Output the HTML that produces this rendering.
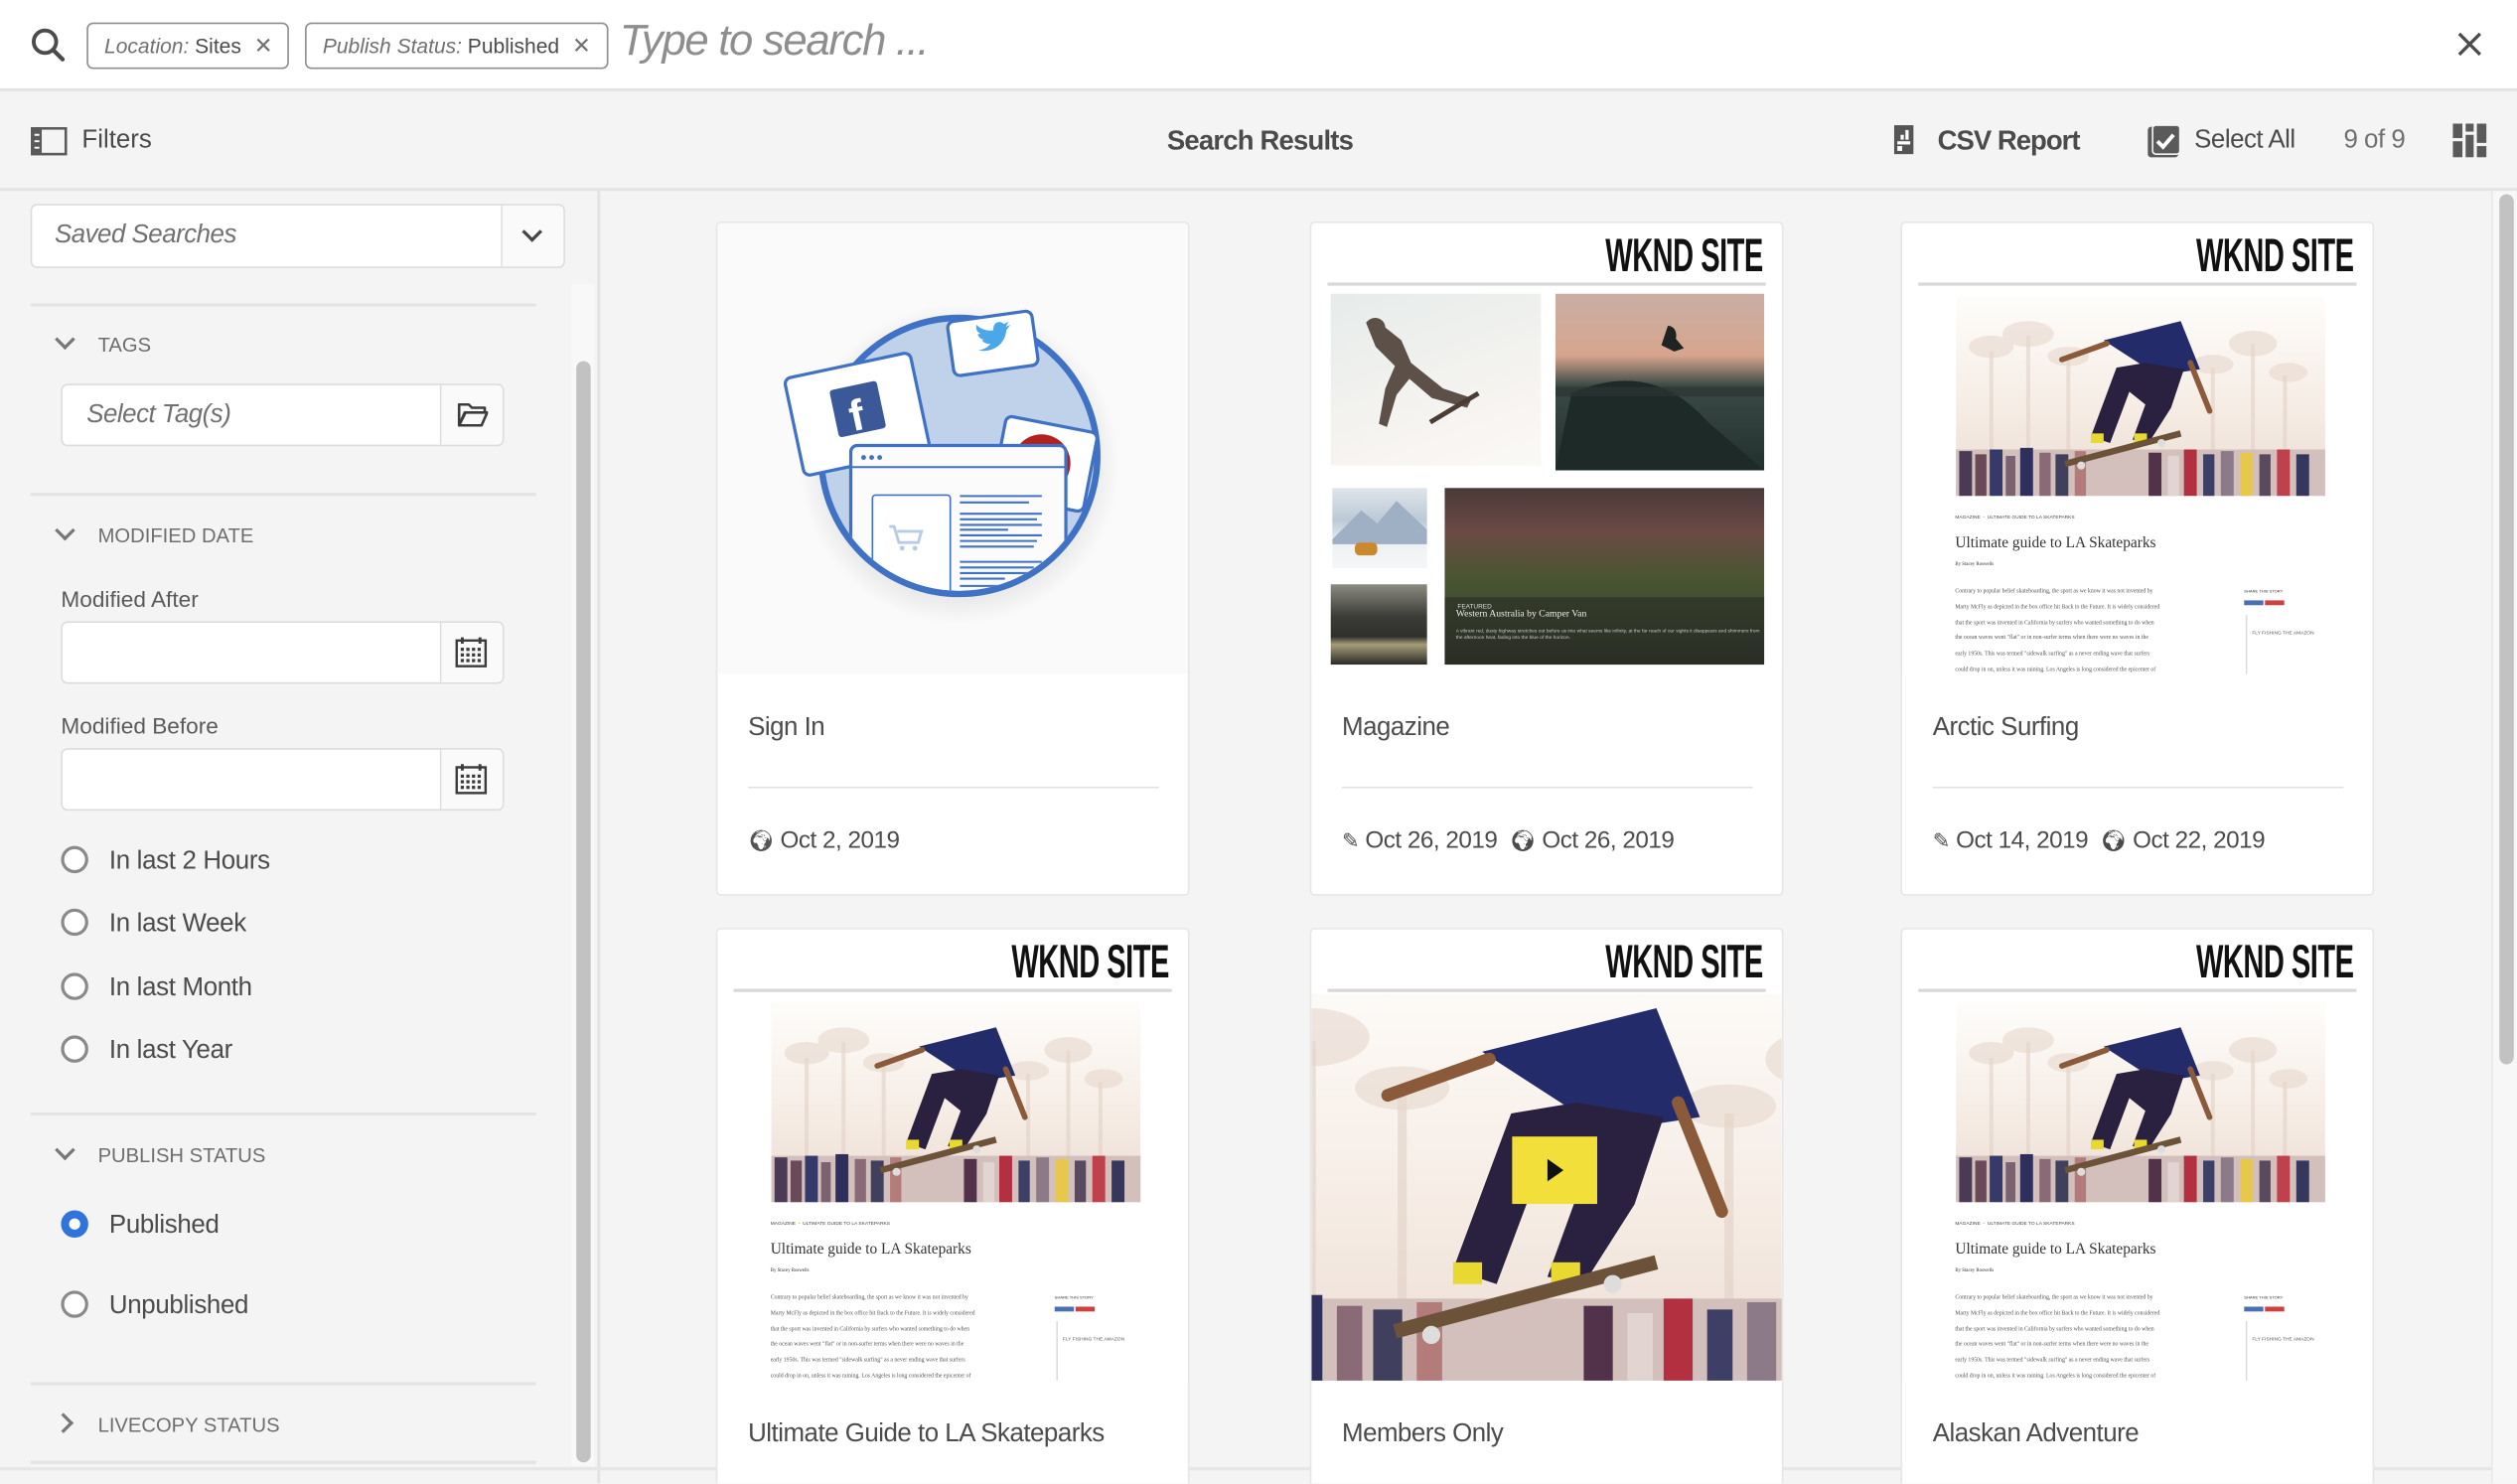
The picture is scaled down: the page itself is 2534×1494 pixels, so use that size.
<!DOCTYPE html>
<html><head><meta charset="utf-8">
<style>
*{box-sizing:border-box;margin:0;padding:0}
html,body{width:2534px;height:1494px;overflow:hidden;background:#f4f4f4}
#w{position:absolute;left:0;top:0;width:1568px;height:924px;transform:scale(1.616071);transform-origin:0 0;font-family:"Liberation Sans",sans-serif;color:#4b4b4b;background:#f4f4f4;overflow:hidden}
.a{position:absolute}
.tag{position:absolute;top:14px;height:29px;border:1px solid #8e8e8e;border-radius:4px;background:#fff;font-size:13px;line-height:27px;padding:0 10px;color:#4b4b4b;white-space:nowrap}
.tag i{color:#707070}
.tag b{font-weight:normal;color:#707070;margin-left:8px;font-size:14px}
.hr{position:absolute;height:2px;background:#e4e4e4}
.sec{position:absolute;left:61px;font-size:12.5px;color:#6e6e6e}
.chev{position:absolute;left:36px;width:9px;height:9px;border-right:2px solid #777;border-bottom:2px solid #777;transform:rotate(45deg)}
.inp{position:absolute;left:38px;width:276px;height:39px;background:#fff;border:1px solid #dcdcdc;border-radius:4px}
.inp .btn{position:absolute;right:0;top:0;width:39px;height:37px;border-left:1px solid #dcdcdc;background:#fafafa;border-radius:0 4px 4px 0}
.lbl{position:absolute;left:38px;font-size:14px;color:#5a5a5a}
.rad{position:absolute;left:38px;width:17px;height:17px;border:2px solid #8a8a8a;border-radius:50%;background:#fff}
.rt{position:absolute;left:68px;font-size:16px;color:#4b4b4b;letter-spacing:-.2px}
.card{position:absolute;width:295px;height:420px;background:#fff;border:1px solid #e6e6e6;border-radius:3px;overflow:hidden}
.card .img{position:absolute;left:0;top:0;width:293px;height:281px;background:#fff;overflow:hidden}
.card .tt{position:absolute;left:19px;top:306px;font-size:16px;color:#4b4b4b;letter-spacing:-.3px}
.card .dv{position:absolute;left:19px;top:351px;width:256px;height:1px;background:#e1e1e1}
.card .dt{position:absolute;left:19px;top:376px;font-size:15px;color:#4b4b4b;white-space:nowrap;letter-spacing:-.3px}
.wk{position:absolute;right:12px;top:5px;font:bold 29px "Liberation Sans",sans-serif;color:#111;transform:scaleX(.62);transform-origin:right center;letter-spacing:-.5px}
.wl{position:absolute;left:10px;right:10px;top:37px;height:2px;background:#d8d8d8}
.art{position:absolute;left:33px;font-family:"Liberation Serif",serif;color:#333;white-space:nowrap}
</style></head><body><div id="w">

<div class="a" style="left:0;top:0;width:1568px;height:57px;background:#fff;border-bottom:2px solid #e4e4e4"></div>
<svg class="a" style="left:19px;top:17px" width="22" height="22" viewBox="0 0 22 22"><circle cx="9" cy="9" r="7" fill="none" stroke="#4b4b4b" stroke-width="2.4"/><path d="M14 14 L20 20" stroke="#4b4b4b" stroke-width="2.6" stroke-linecap="round"/></svg>
<div class="tag" style="left:54px;width:126px"><i>Location:</i> Sites<b>✕</b></div>
<div class="tag" style="left:190px;width:189px"><i>Publish Status:</i> Published<b>✕</b></div>
<div class="a" style="left:386px;top:10px;font-size:27px;font-style:italic;color:#8e8e8e;letter-spacing:-.8px">Type to search ...</div>
<svg class="a" style="left:1530px;top:19px" width="17" height="17" viewBox="0 0 17 17"><path d="M2 2L15 15M15 2L2 15" stroke="#4b4b4b" stroke-width="2"/></svg>

<div class="a" style="left:0;top:117px;width:1568px;height:2px;background:#e4e4e4"></div>
<svg class="a" style="left:19px;top:79px" width="23" height="18" viewBox="0 0 23 18"><rect x="1" y="1" width="21" height="16" fill="none" stroke="#5a5a5a" stroke-width="1.6"/><rect x="1" y="1" width="6" height="16" fill="#5a5a5a"/><path d="M2.5 5h3M2.5 9h3M2.5 13h3" stroke="#fff" stroke-width="1.2"/></svg>
<div class="a" style="left:51px;top:79px;font-size:16px;color:#4b4b4b">Filters</div>
<div class="a" style="left:727px;top:78px;font-size:17px;font-weight:bold;color:#4b4b4b;letter-spacing:-.5px">Search Results</div>
<svg class="a" style="left:1179px;top:77px" width="14" height="20" viewBox="0 0 14 20"><rect x="1" y="1" width="12" height="18" fill="#555"/><rect x="3" y="11" width="8" height="2" fill="#fff"/><rect x="3" y="14" width="3" height="3" fill="#fff"/><rect x="8" y="4" width="2" height="6" fill="#fff"/><rect x="5" y="7" width="2" height="3" fill="#fff"/></svg>
<div class="a" style="left:1207px;top:78px;font-size:17px;font-weight:bold;color:#4b4b4b;letter-spacing:-.6px">CSV Report</div>
<svg class="a" style="left:1337px;top:77px" width="22" height="22" viewBox="0 0 22 22"><rect x="1" y="2" width="19" height="19" rx="2" fill="#5a5a5a"/><rect x="4" y="1" width="17" height="18" rx="2" fill="#5a5a5a" stroke="#f4f4f4" stroke-width="1"/><path d="M7 11l3.5 3.5L17 7" stroke="#fff" stroke-width="2.4" fill="none"/></svg>
<div class="a" style="left:1367px;top:79px;font-size:16px;color:#4b4b4b;letter-spacing:-.3px">Select All</div>
<div class="a" style="left:1460px;top:79px;font-size:16px;color:#707070;letter-spacing:-.3px">9 of 9</div>
<svg class="a" style="left:1528px;top:77px" width="21" height="21" viewBox="0 0 21 21" fill="#5a5a5a"><rect x="0" y="0" width="6" height="9"/><rect x="0" y="11" width="6" height="10"/><rect x="8" y="0" width="5" height="5"/><rect x="8" y="7" width="5" height="14"/><rect x="15" y="0" width="6" height="12"/><rect x="15" y="14" width="6" height="7"/></svg>

<div class="a" style="left:372px;top:119px;width:2px;height:806px;background:#e4e4e4"></div>
<div class="a" style="left:19px;top:127px;width:333px;height:40px;background:#fff;border:1px solid #dcdcdc;border-radius:4px"></div>
<div class="a" style="left:312px;top:128px;width:39px;height:38px;border-left:1px solid #dcdcdc;background:#fafafa;border-radius:0 4px 4px 0"></div>
<div class="a" style="left:34px;top:138px;font-size:16px;font-style:italic;color:#707070;letter-spacing:-.3px">Saved Searches</div>
<div class="a" style="left:327px;top:140px;width:9px;height:9px;border-right:2px solid #444;border-bottom:2px solid #444;transform:rotate(45deg)"></div>

<div class="a" style="left:356px;top:177px;width:14px;height:736px;background:#f8f8f8"></div>
<div class="a" style="left:359px;top:225px;width:9px;height:686px;background:#c2c2c2;border-radius:5px"></div>

<div class="hr" style="left:19px;top:189px;width:315px"></div>
<div class="chev" style="top:207px"></div>
<div class="sec" style="top:208px">TAGS</div>
<div class="inp" style="top:239px"><div class="btn"></div></div>
<div class="a" style="left:54px;top:250px;font-size:16px;font-style:italic;color:#707070;letter-spacing:-.3px">Select Tag(s)</div>
<svg class="a" style="left:285px;top:250px" width="19" height="16" viewBox="0 0 19 16"><path d="M1 2h6l2 2h8v3H5L1 15z M1 15L4.5 7H18.5L15 15z" fill="none" stroke="#3c3c3c" stroke-width="1.6" stroke-linejoin="round"/></svg>

<div class="hr" style="left:19px;top:307px;width:315px"></div>
<div class="chev" style="top:326px"></div>
<div class="sec" style="top:327px">MODIFIED DATE</div>
<div class="lbl" style="top:365px">Modified After</div>
<div class="inp" style="top:387px"><div class="btn"></div></div>
<div class="lbl" style="top:444px">Modified Before</div>
<div class="inp" style="top:466px"><div class="btn"></div></div>
<svg class="a" style="left:283px;top:396px" width="21" height="21" viewBox="0 0 21 21"><rect x="1.5" y="3" width="18" height="16" fill="none" stroke="#3c3c3c" stroke-width="1.5"/><path d="M5 1v4M16 1v4" stroke="#3c3c3c" stroke-width="1.8"/><g fill="#3c3c3c"><rect x="4" y="7.5" width="2" height="2"/><rect x="7.5" y="7.5" width="2" height="2"/><rect x="11" y="7.5" width="2" height="2"/><rect x="14.5" y="7.5" width="2" height="2"/><rect x="4" y="11" width="2" height="2"/><rect x="7.5" y="11" width="2" height="2"/><rect x="11" y="11" width="2" height="2"/><rect x="14.5" y="11" width="2" height="2"/><rect x="4" y="14.5" width="2" height="2"/><rect x="7.5" y="14.5" width="2" height="2"/><rect x="11" y="14.5" width="2" height="2"/><rect x="14.5" y="14.5" width="2" height="2"/></g></svg>
<svg class="a" style="left:283px;top:475px" width="21" height="21" viewBox="0 0 21 21"><rect x="1.5" y="3" width="18" height="16" fill="none" stroke="#3c3c3c" stroke-width="1.5"/><path d="M5 1v4M16 1v4" stroke="#3c3c3c" stroke-width="1.8"/><g fill="#3c3c3c"><rect x="4" y="7.5" width="2" height="2"/><rect x="7.5" y="7.5" width="2" height="2"/><rect x="11" y="7.5" width="2" height="2"/><rect x="14.5" y="7.5" width="2" height="2"/><rect x="4" y="11" width="2" height="2"/><rect x="7.5" y="11" width="2" height="2"/><rect x="11" y="11" width="2" height="2"/><rect x="14.5" y="11" width="2" height="2"/><rect x="4" y="14.5" width="2" height="2"/><rect x="7.5" y="14.5" width="2" height="2"/><rect x="11" y="14.5" width="2" height="2"/><rect x="14.5" y="14.5" width="2" height="2"/></g></svg>

<div class="rad" style="top:527px"></div><div class="rt" style="top:528px">In last 2 Hours</div>
<div class="rad" style="top:566px"></div><div class="rt" style="top:567px">In last Week</div>
<div class="rad" style="top:606px"></div><div class="rt" style="top:607px">In last Month</div>
<div class="rad" style="top:645px"></div><div class="rt" style="top:646px">In last Year</div>

<div class="hr" style="left:19px;top:693px;width:315px"></div>
<div class="chev" style="top:712px"></div>
<div class="sec" style="top:713px">PUBLISH STATUS</div>
<div class="rad" style="top:754px;border:5px solid #2e74dc"></div><div class="rt" style="top:755px">Published</div>
<div class="rad" style="top:804px"></div><div class="rt" style="top:805px">Unpublished</div>
<div class="hr" style="left:19px;top:861px;width:315px"></div>
<div class="a" style="left:35px;top:882px;width:9px;height:9px;border-right:2px solid #777;border-bottom:2px solid #777;transform:rotate(-45deg)"></div>
<div class="sec" style="top:881px">LIVECOPY STATUS</div>
<div class="hr" style="left:19px;top:910px;width:315px"></div>
<div class="hr" style="left:0;top:914px;width:1568px;background:#e6e6e6"></div>

<div class="a" style="left:1552px;top:119px;width:16px;height:806px;background:#f7f7f7;border-left:1px solid #e8e8e8"></div>
<div class="a" style="left:1557px;top:121px;width:9px;height:542px;background:#c2c2c2;border-radius:5px"></div>

<svg width="0" height="0" style="position:absolute"><defs>
<linearGradient id="sk" x1="0" y1="0" x2="0" y2="1"><stop offset="0" stop-color="#fefdfb"/><stop offset=".6" stop-color="#f5ebe3"/><stop offset="1" stop-color="#eadbd3"/></linearGradient>
<symbol id="skater" viewBox="0 0 230 125">
<rect width="230" height="125" fill="url(#sk)"/>
<g stroke="#e2d2c6" stroke-width="2.5" opacity=".6"><path d="M22 110V35M45 110V25M70 110V40M160 110V45M185 110V30M205 110V50"/></g>
<g fill="#e6d6ca" opacity=".55"><ellipse cx="22" cy="32" rx="14" ry="7"/><ellipse cx="45" cy="24" rx="16" ry="8"/><ellipse cx="70" cy="38" rx="13" ry="6"/><ellipse cx="160" cy="43" rx="13" ry="6"/><ellipse cx="185" cy="30" rx="15" ry="8"/><ellipse cx="207" cy="48" rx="12" ry="6"/></g>
<g><rect x="0" y="96" width="230" height="29" fill="#d3bfbc"/>
<rect x="2" y="97" width="8" height="28" fill="#4b3a55"/><rect x="12" y="99" width="7" height="26" fill="#6a4a58"/><rect x="21" y="96" width="8" height="29" fill="#343a6a"/><rect x="31" y="100" width="6" height="25" fill="#7a6270"/><rect x="40" y="95" width="8" height="30" fill="#2f2f5e"/><rect x="52" y="98" width="7" height="27" fill="#8a6a76"/><rect x="62" y="99" width="8" height="26" fill="#40405e"/><rect x="74" y="97" width="7" height="28" fill="#b37b7a"/><rect x="120" y="98" width="8" height="27" fill="#52324a"/><rect x="132" y="100" width="7" height="25" fill="#e2d4d0"/><rect x="142" y="96" width="8" height="29" fill="#b23040"/><rect x="154" y="99" width="7" height="26" fill="#3d3f66"/><rect x="165" y="97" width="8" height="28" fill="#8c7a88"/><rect x="177" y="98" width="8" height="27" fill="#e8c84a"/><rect x="189" y="99" width="7" height="26" fill="#5a4a60"/><rect x="200" y="96" width="8" height="29" fill="#c0414e"/><rect x="212" y="99" width="8" height="26" fill="#36375c"/></g>
<path d="M92 28 L140 16 L152 46 L126 50 Z" fill="#232b6a"/>
<path d="M118 42 L142 46 L134 70 L120 92 L110 90 L118 68 L108 60 L96 92 L84 88 L100 45 Z" fill="#2a2040"/>
<path d="M94 30 L66 40 M146 42 L158 72" stroke="#8b5a3a" stroke-width="3.5" fill="none" stroke-linecap="round"/>
<rect x="84" y="86" width="8" height="6" fill="#e8d830"/><rect x="111" y="86" width="8" height="6" fill="#e8d830"/>
<path d="M68 105 L140 86" stroke="#6b5238" stroke-width="4"/>
<circle cx="78" cy="106" r="2.5" fill="#ddd"/><circle cx="128" cy="92" r="2.5" fill="#ddd"/>
</symbol>
</defs></svg>

<div class="card" style="left:446px;top:138px">
 <div class="img" style="background:#fafafa">
 <svg width="293" height="281" viewBox="0 0 293 281">
  <defs><clipPath id="cc"><circle cx="150.6" cy="145" r="84"/></clipPath><radialGradient id="sh"><stop offset=".8" stop-color="#000" stop-opacity=".08"/><stop offset="1" stop-color="#000" stop-opacity="0"/></radialGradient></defs>
  <circle cx="150.6" cy="150" r="100" fill="url(#sh)"/>
  <circle cx="150.6" cy="145" r="86" fill="#c0d2ea" stroke="#3f72c5" stroke-width="4"/>
  <g transform="rotate(-12 87 119)"><rect x="47" y="88" width="80" height="62" rx="4" fill="#fff" stroke="#3f72c5" stroke-width="2"/><rect x="73" y="101" width="30" height="30" rx="2" fill="#3b5998"/><text x="82" y="129" font-family="Liberation Sans" font-weight="bold" font-size="27" fill="#fff">f</text></g>
  <g transform="rotate(-8 171 75)"><rect x="145" y="58" width="53" height="34" rx="4" fill="#fff" stroke="#3f72c5" stroke-width="2"/><path d="M162 78c8 3 17-1 19-10l3-3-3 1 2-3-3 1c-2-3-7-2-7 3-4 0-8-2-10-5-1 3 0 5 2 6l-2 0c0 2 2 4 4 4h-2c1 2 3 3 5 3-2 2-5 3-8 3z" fill="#4aa8e8"/></g>
  <g transform="rotate(11 204 149)"><rect x="175" y="125" width="58" height="50" rx="4" fill="#fff" stroke="#3f72c5" stroke-width="2"/><circle cx="202" cy="150" r="18" fill="#b3201e"/></g>
  <g clip-path="url(#cc)"><rect x="83" y="138.5" width="134" height="140" rx="4" fill="#fbfbfb" stroke="#3f72c5" stroke-width="2"/>
  <path d="M83 152h134" stroke="#3f72c5" stroke-width="1.2"/><circle cx="91" cy="146" r="1.5" fill="#3f72c5"/><circle cx="96" cy="146" r="1.5" fill="#3f72c5"/><circle cx="101" cy="146" r="1.5" fill="#3f72c5"/>
  <rect x="96.5" y="169.4" width="48.5" height="100" rx="2" fill="#fff" stroke="#3f72c5" stroke-width="1"/>
  <path d="M107 189h3l3 10h12l2-7h-15" stroke="#b9cbe6" stroke-width="1.8" fill="none"/><circle cx="115" cy="202.5" r="1.5" fill="#b9cbe6"/><circle cx="123" cy="202.5" r="1.5" fill="#b9cbe6"/>
  <g stroke="#3f72c5" stroke-width="1.3"><path d="M151 170h51M151 174h43M151 181h51M151 184.5h48M151 188h51M151 191h30M151 194.5h51M151 198h48M151 201.5h46M151 211h51M151 214.5h46M151 218h48M151 221.5h28M151 226h51"/></g></g>
 </svg></div>
 <div class="tt">Sign In</div><div class="dv"></div>
 <div class="dt"><span style="font-size:13px;color:#555">🌍&#xFE0E;</span> Oct 2, 2019</div>
</div>

<div class="card" style="left:816px;top:138px">
 <div class="img">
  <div class="wk">WKND SITE</div><div class="wl"></div>
  <div class="a" style="left:12px;top:44px;width:131px;height:107px;background:linear-gradient(160deg,#e6ecea,#f7f4f1 70%,#fbf9f6)"></div>
  <svg class="a" style="left:12px;top:44px" width="131" height="107" viewBox="0 0 131 107"><path d="M22 18c5-6 12-2 12 3l10 8 6 14 20 16 18 6-3 6-22-6-14-12-8 10-6 20-5-2 4-22 6-14-12-12z" fill="#5c5048"/><path d="M62 80 L92 62" stroke="#4a3d36" stroke-width="3"/></svg>
  <div class="a" style="left:152px;top:44px;width:130px;height:110px;background:linear-gradient(180deg,#c9aea4 0%,#d7a58e 35%,#3c4a46 52%,#20302d 100%)"></div>
  <svg class="a" style="left:152px;top:44px" width="130" height="110" viewBox="0 0 130 110"><path d="M10 62 Q60 40 95 80 L130 110 L0 110Z" fill="#1d2a28"/><path d="M0 58h130v6H0z" fill="#2b3533" opacity=".7"/><path d="M70 20c4 0 6 4 5 8l5 6-6 2-8-4z" fill="#1e2422"/></svg>
  <div class="a" style="left:13px;top:165px;width:59px;height:50px;background:linear-gradient(180deg,#dfe5ea,#bcc9d6 40%,#eef1f4 70%,#f5f6f7)"></div>
  <svg class="a" style="left:13px;top:165px" width="59" height="50" viewBox="0 0 59 50"><path d="M0 32 L18 14 L28 22 L40 8 L59 26 V35 H0z" fill="#9fb0c4"/><rect x="14" y="34" width="14" height="8" rx="3" fill="#c9892c"/></svg>
  <div class="a" style="left:12px;top:225px;width:60px;height:50px;background:linear-gradient(180deg,#8c8b80,#3b3c38 40%,#2f302d 65%,#a69c78 75%,#2a2b27)"></div>
  <div class="a" style="left:83px;top:165px;width:199px;height:110px;background:linear-gradient(180deg,#4a3a38 0%,#6b4a45 25%,#4b5532 50%,#3b4a30 75%,#2e3428 100%)"></div>
  <div class="a" style="left:83px;top:233px;width:199px;height:42px;background:rgba(40,40,35,.55)"></div>
  <div class="a" style="left:91px;top:236px;font:4px 'Liberation Sans';color:#ddd">FEATURED</div>
  <div class="a" style="left:90px;top:241px;font:6px 'Liberation Serif';color:#eee">Western Australia by Camper Van</div>
  <div class="a" style="left:90px;top:252px;font:3px 'Liberation Sans';color:#ccc;width:190px">A vibrant red, dusty highway stretches out before us into what seems like infinity, at the far reach of our sights it disappears and shimmers from the afternoon heat, fading into the blue of the horizon.</div>
 </div>
 <div class="tt">Magazine</div><div class="dv"></div>
 <div class="dt"><span style="font-size:13px">✎</span> Oct 26, 2019 &nbsp;<span style="font-size:13px">🌍&#xFE0E;</span> Oct 26, 2019</div>
</div>

<div class="card" style="left:1184px;top:138px">
 <div class="img">
  <div class="wk">WKND SITE</div><div class="wl"></div>
  <svg class="a" style="left:33px;top:45px" width="231" height="125"><use href="#skater"/></svg>
  <div class="art" style="top:181px;font:3px 'Liberation Sans';color:#444">MAGAZINE &nbsp;<span style="color:#e8c020">•</span>&nbsp; ULTIMATE GUIDE TO LA SKATEPARKS</div>
  <div class="art" style="top:195px;font-size:9.5px">Ultimate guide to LA Skateparks</div>
  <div class="art" style="top:210px;font-size:3px">By Stacey Roswells</div>
  <div class="art" style="top:225px;font-size:3.6px;line-height:9.8px;color:#555">Contrary to popular belief skateboarding, the sport as we know it was not invented by<br>Marty McFly as depicted in the box office hit Back to the Future. It is widely considered<br>that the sport was invented in California by surfers who wanted something to do when<br>the ocean waves went "flat" or in non-surfer terms when there were no waves in the<br>early 1950s. This was termed "sidewalk surfing" as a never ending wave that surfers<br>could drop in on, unless it was raining. Los Angeles is long considered the epicenter of</div>
  <div class="a" style="left:213px;top:228px;font:2.5px 'Liberation Sans';color:#333">SHARE THIS STORY</div>
  <div class="a" style="left:213px;top:235px;width:12px;height:3px;background:#4a6fb5"></div><div class="a" style="left:226px;top:235px;width:12px;height:3px;background:#d04040"></div>
  <div class="a" style="left:214px;top:244px;width:1px;height:38px;background:#ddd"></div>
  <div class="a" style="left:218px;top:253px;font:3px 'Liberation Sans';color:#555">FLY FISHING THE AMAZON</div>
 </div>
 <div class="tt">Arctic Surfing</div><div class="dv"></div>
 <div class="dt"><span style="font-size:13px">✎</span> Oct 14, 2019 &nbsp;<span style="font-size:13px">🌍&#xFE0E;</span> Oct 22, 2019</div>
</div>

<div class="card" style="left:446px;top:578px">
 <div class="img">
  <div class="wk">WKND SITE</div><div class="wl"></div>
  <svg class="a" style="left:33px;top:45px" width="231" height="125"><use href="#skater"/></svg>
  <div class="art" style="top:181px;font:3px 'Liberation Sans';color:#444">MAGAZINE &nbsp;<span style="color:#e8c020">•</span>&nbsp; ULTIMATE GUIDE TO LA SKATEPARKS</div>
  <div class="art" style="top:195px;font-size:9.5px">Ultimate guide to LA Skateparks</div>
  <div class="art" style="top:210px;font-size:3px">By Stacey Roswells</div>
  <div class="art" style="top:225px;font-size:3.6px;line-height:9.8px;color:#555">Contrary to popular belief skateboarding, the sport as we know it was not invented by<br>Marty McFly as depicted in the box office hit Back to the Future. It is widely considered<br>that the sport was invented in California by surfers who wanted something to do when<br>the ocean waves went "flat" or in non-surfer terms when there were no waves in the<br>early 1950s. This was termed "sidewalk surfing" as a never ending wave that surfers<br>could drop in on, unless it was raining. Los Angeles is long considered the epicenter of</div>
  <div class="a" style="left:210px;top:228px;font:2.5px 'Liberation Sans';color:#333">SHARE THIS STORY</div>
  <div class="a" style="left:210px;top:235px;width:12px;height:3px;background:#4a6fb5"></div><div class="a" style="left:223px;top:235px;width:12px;height:3px;background:#d04040"></div>
  <div class="a" style="left:211px;top:244px;width:1px;height:38px;background:#ddd"></div>
  <div class="a" style="left:215px;top:253px;font:3px 'Liberation Sans';color:#555">FLY FISHING THE AMAZON</div>
 </div>
 <div class="tt">Ultimate Guide to LA Skateparks</div>
</div>

<div class="card" style="left:816px;top:578px">
 <div class="img">
  <div class="wk">WKND SITE</div><div class="wl"></div>
  <svg class="a" style="left:0;top:40px" width="294" height="242" viewBox="45 6 130 119" preserveAspectRatio="xMidYMid slice"><use href="#skater" width="230" height="125"/></svg>
  <div class="a" style="left:125px;top:129px;width:53px;height:42px;background:#f3df3a"></div>
  <div class="a" style="left:147px;top:143px;width:0;height:0;border-left:10px solid #111;border-top:7px solid transparent;border-bottom:7px solid transparent"></div>
 </div>
 <div class="tt">Members Only</div>
</div>

<div class="card" style="left:1184px;top:578px">
 <div class="img">
  <div class="wk">WKND SITE</div><div class="wl"></div>
  <svg class="a" style="left:33px;top:45px" width="231" height="125"><use href="#skater"/></svg>
  <div class="art" style="top:181px;font:3px 'Liberation Sans';color:#444">MAGAZINE &nbsp;<span style="color:#e8c020">•</span>&nbsp; ULTIMATE GUIDE TO LA SKATEPARKS</div>
  <div class="art" style="top:195px;font-size:9.5px">Ultimate guide to LA Skateparks</div>
  <div class="art" style="top:210px;font-size:3px">By Stacey Roswells</div>
  <div class="art" style="top:225px;font-size:3.6px;line-height:9.8px;color:#555">Contrary to popular belief skateboarding, the sport as we know it was not invented by<br>Marty McFly as depicted in the box office hit Back to the Future. It is widely considered<br>that the sport was invented in California by surfers who wanted something to do when<br>the ocean waves went "flat" or in non-surfer terms when there were no waves in the<br>early 1950s. This was termed "sidewalk surfing" as a never ending wave that surfers<br>could drop in on, unless it was raining. Los Angeles is long considered the epicenter of</div>
  <div class="a" style="left:213px;top:228px;font:2.5px 'Liberation Sans';color:#333">SHARE THIS STORY</div>
  <div class="a" style="left:213px;top:235px;width:12px;height:3px;background:#4a6fb5"></div><div class="a" style="left:226px;top:235px;width:12px;height:3px;background:#d04040"></div>
  <div class="a" style="left:214px;top:244px;width:1px;height:38px;background:#ddd"></div>
  <div class="a" style="left:218px;top:253px;font:3px 'Liberation Sans';color:#555">FLY FISHING THE AMAZON</div>
 </div>
 <div class="tt">Alaskan Adventure</div>
</div>

</div></body></html>
